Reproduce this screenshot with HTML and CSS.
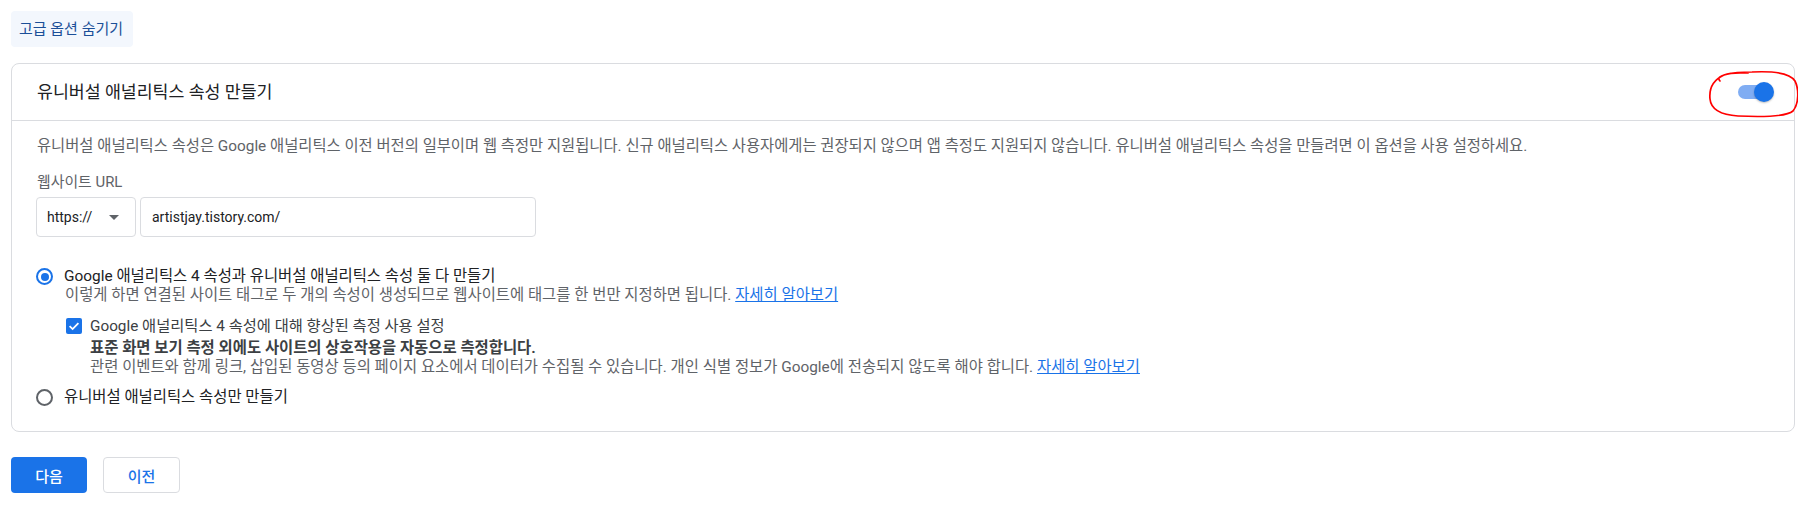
FILE: index.html
```html
<!DOCTYPE html>
<html lang="ko">
<head>
<meta charset="utf-8">
<title>유니버설 애널리틱스 속성 만들기</title>
<link rel="stylesheet" href="styles.css">
</head>
<body>
<div class="page">
  <button class="adv-btn">고급 옵션 숨기기</button>

  <section class="card">
    <header class="card-head">
      <h2 class="card-title">유니버설 애널리틱스 속성 만들기</h2>
      <span class="toggle"><span class="track"></span><span class="thumb"></span></span>
      <svg class="annot" viewBox="0 0 96 52" width="96" height="52" aria-hidden="true">
        <path d="M16 13 C10 7 28 4 48 4 C68 3 86 5 91 13 C95 21 95 36 89 43 C82 49 56 49 34 48 C18 47 7 42 6 31 C5 21 9 12 20 7 C28 4 36 5 44 5" fill="none" stroke="#ff0000" stroke-width="1.7" stroke-linecap="round"/>
      </svg>
    </header>

    <div class="card-body">
      <p class="desc">유니버설 애널리틱스 속성은 Google 애널리틱스 이전 버전의 일부이며 웹 측정만 지원됩니다. 신규 애널리틱스 사용자에게는 권장되지 않으며 앱 측정도 지원되지 않습니다. 유니버설 애널리틱스 속성을 만들려면 이 옵션을 사용 설정하세요.</p>

      <div class="field-label">웹사이트 URL</div>
      <div class="url-row">
        <div class="select">https://<span class="caret"></span></div>
        <div class="input">artistjay.tistory.com/</div>
      </div>

      <div class="options">
        <div class="radio-row">
          <span class="radio checked"><span class="dot"></span></span>
          <div class="radio-text">
            <div class="radio-label">Google 애널리틱스 4 속성과 유니버설 애널리틱스 속성 둘 다 만들기</div>
            <div class="radio-sub">이렇게 하면 연결된 사이트 태그로 두 개의 속성이 생성되므로 웹사이트에 태그를 한 번만 지정하면 됩니다. <a class="link" href="#">자세히 알아보기</a></div>

            <div class="check-row">
              <span class="checkbox">
                <svg viewBox="0 0 16 16" width="16" height="16" aria-hidden="true"><path d="M3.6 8.2 L6.6 11.1 L12.4 5.1" fill="none" stroke="#fff" stroke-width="1.8"/></svg>
              </span>
              <div class="check-text">
                <div class="check-label">Google 애널리틱스 4 속성에 대해 향상된 측정 사용 설정</div>
                <div class="check-bold">표준 화면 보기 측정 외에도 사이트의 상호작용을 자동으로 측정합니다.</div>
                <div class="check-sub">관련 이벤트와 함께 링크, 삽입된 동영상 등의 페이지 요소에서 데이터가 수집될 수 있습니다. 개인 식별 정보가 Google에 전송되지 않도록 해야 합니다. <a class="link" href="#">자세히 알아보기</a></div>
              </div>
            </div>
          </div>
        </div>

        <div class="radio-row second">
          <span class="radio"></span>
          <div class="radio-text">
            <div class="radio-label">유니버설 애널리틱스 속성만 만들기</div>
          </div>
        </div>
      </div>
    </div>
  </section>

  <div class="actions">
    <button class="btn primary">다음</button>
    <button class="btn secondary">이전</button>
  </div>
</div>
</body>
</html>
```

FILE: styles.css
```css
* { box-sizing: border-box; }

html, body {
  margin: 0;
  padding: 0;
  background: #ffffff;
  overflow: hidden;
}

body {
  font-family: Roboto, "Noto Sans CJK KR", sans-serif;
  font-size: 15px;
  color: #202124;
}

.page {
  padding: 11px 3px 0 11px;
  display: flex;
  flex-direction: column;
  align-items: flex-start;
}

.adv-btn {
  height: 36px;
  padding: 0 10px 0 8px;
  border: none;
  border-radius: 4px;
  background: #f3f7fd;
  color: #1b4f98;
  font-family: Roboto, "Noto Sans CJK KR", sans-serif;
  font-size: 15px;
  line-height: 20px;
  cursor: pointer;
}

.card {
  align-self: stretch;
  margin-top: 16px;
  border: 1px solid #dadce0;
  border-radius: 8px;
}

.card-head {
  position: relative;
  height: 57px;
  padding: 0 20px 0 25px;
  border-bottom: 1px solid #dadce0;
  display: flex;
  align-items: center;
  justify-content: space-between;
}

.card-title {
  margin: 0;
  font-size: 17.3px;
  font-weight: 400;
  line-height: 24px;
  color: #202124;
}

.toggle {
  position: relative;
  width: 36px;
  height: 20px;
}

.toggle .track {
  position: absolute;
  left: 0;
  top: 3px;
  width: 34px;
  height: 14px;
  border-radius: 7px;
  background: #80adf3;
}

.toggle .thumb {
  position: absolute;
  right: 0;
  top: 0;
  width: 20px;
  height: 20px;
  border-radius: 50%;
  background: #1a73e8;
  box-shadow: 0 1px 2px rgba(0,0,0,0.25);
}

.annot {
  position: absolute;
  right: -6px;
  top: 4px;
}

.card-body {
  padding: 15px 24px 24px 24px;
}

.desc {
  margin: 0;
  padding-left: 1px;
  font-size: 15.35px;
  line-height: 20px;
  color: #5f6368;
}

.field-label {
  margin-top: 16px;
  padding-left: 1px;
  font-size: 14.9px;
  line-height: 20px;
  color: #5f6368;
}

.url-row {
  margin-top: 5px;
  display: flex;
  gap: 4px;
}

.select,
.input {
  height: 40px;
  border: 1px solid #dadce0;
  border-radius: 4px;
  display: flex;
  align-items: center;
  font-size: 14px;
  color: #202124;
}

.select {
  width: 100px;
  padding-left: 10px;
  position: relative;
}

.caret {
  margin-left: 17px;
  width: 0;
  height: 0;
  border-left: 5px solid transparent;
  border-right: 5px solid transparent;
  border-top: 5px solid #5f6368;
}

.input {
  width: 396px;
  padding-left: 11px;
}

.options {
  margin-top: 29px;
  display: flex;
  flex-direction: column;
}

.radio-row {
  display: flex;
  align-items: flex-start;
  gap: 11px;
}

.radio-row.second {
  margin-top: 11px;
}

.radio {
  flex: none;
  width: 17px;
  height: 17px;
  margin-top: 2px;
  border: 2px solid #5f6368;
  border-radius: 50%;
  display: flex;
  align-items: center;
  justify-content: center;
}

.radio.checked {
  border-color: #1a73e8;
}

.radio .dot {
  width: 8px;
  height: 8px;
  border-radius: 50%;
  background: #1a73e8;
}

.radio-text {
  display: flex;
  flex-direction: column;
}

.radio-label {
  font-size: 15.4px;
  line-height: 20px;
  color: #202124;
}

.radio-sub {
  padding-left: 1px;
  font-size: 15.4px;
  line-height: 18px;
  color: #5f6368;
}

.link {
  color: #1a73e8;
  text-decoration: underline;
}

.check-row {
  margin-top: 12px;
  display: flex;
  align-items: flex-start;
  gap: 8px;
  padding-left: 2px;
}

.checkbox {
  flex: none;
  width: 16px;
  height: 16px;
  margin-top: 2px;
  border-radius: 2px;
  background: #1a73e8;
  display: flex;
}

.check-text {
  display: flex;
  flex-direction: column;
}

.check-label {
  font-size: 15.3px;
  line-height: 20px;
  color: #3c4043;
}

.check-bold {
  margin-top: 2px;
  font-size: 15.4px;
  line-height: 20px;
  font-weight: 700;
  color: #3c4043;
}

.check-sub {
  font-size: 15.4px;
  line-height: 18px;
  color: #5f6368;
}

.actions {
  margin-top: 25px;
  display: flex;
  gap: 16px;
}

.btn {
  height: 36px;
  border-radius: 4px;
  font-family: Roboto, "Noto Sans CJK KR", sans-serif;
  font-size: 15px;
  font-weight: 500;
  cursor: pointer;
}

.btn.primary {
  width: 76px;
  border: none;
  background: #1a73e8;
  color: #ffffff;
}

.btn.secondary {
  width: 77px;
  border: 1px solid #dadce0;
  background: #ffffff;
  color: #1a73e8;
}
```
